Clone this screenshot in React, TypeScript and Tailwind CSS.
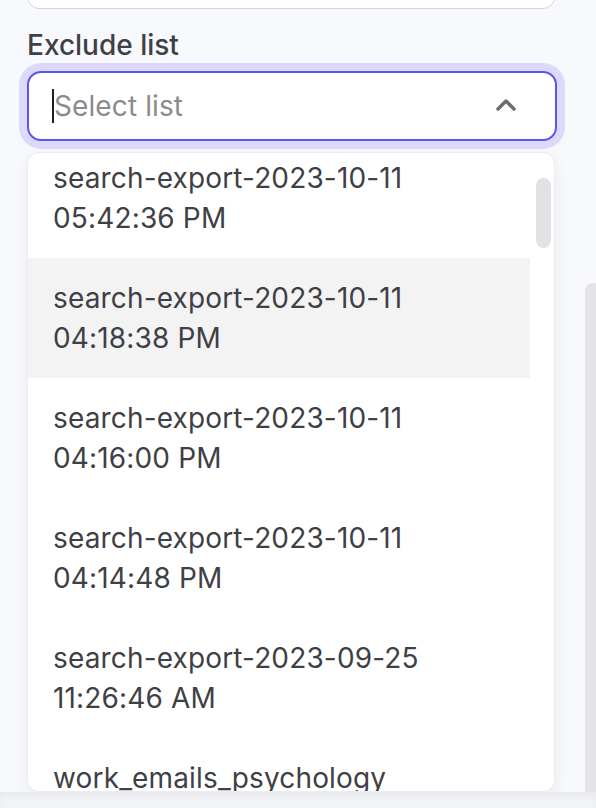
import React from 'react';

interface ListOption {
  id: string;
  name: string;
  time?: string;
}

const options: ListOption[] = [
  { id: 'a', name: 'search-export-2023-10-11', time: '05:42:36 PM' },
  { id: 'b', name: 'search-export-2023-10-11', time: '04:18:38 PM' },
  { id: 'c', name: 'search-export-2023-10-11', time: '04:16:00 PM' },
  { id: 'd', name: 'search-export-2023-10-11', time: '04:14:48 PM' },
  { id: 'e', name: 'search-export-2023-09-25', time: '11:26:46 AM' },
  { id: 'f', name: 'work_emails_psychology' }
];

const App: React.FC = () => {
  const activeId = 'b';

  return (
    <div className="h-[808px] w-[596px] overflow-hidden bg-[#f8f9fc] flex flex-col font-['Inter',sans-serif]">
      <div className="flex h-[792px]">
        <div className="w-[558px] pl-[27px] flex flex-col">
          {/* Previous field, mostly scrolled away */}
          <div className="-mt-[31px] h-[40px] w-[528px] shrink-0 rounded-[12px] border-[1.5px] border-[#d4d4d8] bg-white" />

          <label className="mt-[16px] text-[28px] leading-[40px] font-medium text-[#3f3f46]">
            Exclude list
          </label>

          {/* Select input (open) */}
          <div className="mt-[6px] h-[70px] w-[530px] shrink-0 rounded-[14px] border-2 border-[#5b55f2] ring-[8px] ring-[#dcd9fb] bg-white flex items-center pl-[23px] pr-[39px]">
            <div className="w-[2px] h-[34px] bg-[#1f1f23]" />
            <span className="flex-1 text-[28px] leading-[40px] tracking-[0.1px] text-[#8b8b90]">Select list</span>
            <svg width="20" height="13" viewBox="0 0 20 13" fill="none" className="-mt-[3px]">
              <path d="M2 11 L10 3 L18 11" stroke="#6b6b72" strokeWidth="3.4" strokeLinecap="round" strokeLinejoin="round" />
            </svg>
          </div>

          {/* Dropdown panel */}
          <div className="mt-[11px] flex-1 min-h-0 w-[528px] rounded-[12px] border border-[#ececef] bg-white shadow-[0_6px_16px_rgba(0,0,0,0.06)] overflow-hidden flex">
            <ul className="w-[502px] -mt-[15px] shrink-0">
              {options.map(opt => (
                <li
                  key={opt.id}
                  className={`pl-[25px] py-[20px] text-[28px] leading-[40px] tracking-[0.15px] text-[#3f3f46] ${
                    opt.id === activeId ? 'bg-[#f3f3f4]' : ''
                  }`}
                >
                  <span className="block">{opt.name}</span>
                  {opt.time && <span className="block">{opt.time}</span>}
                </li>
              ))}
            </ul>
            <div className="flex-1 pt-[25px] pl-[6px]">
              <div className="w-[15px] h-[70px] rounded-full bg-[#e2e2e4]" />
            </div>
          </div>
        </div>

        <div className="flex-1 flex justify-end pt-[283px]">
          <div className="w-[11px] h-full bg-[#e4e4e7] rounded-tl-[8px]" />
        </div>
      </div>
      <div className="h-[16px] bg-[#f2f3f7] shadow-[inset_0_4px_6px_rgba(0,0,0,0.04)]" />
    </div>
  );
};

export default App;
